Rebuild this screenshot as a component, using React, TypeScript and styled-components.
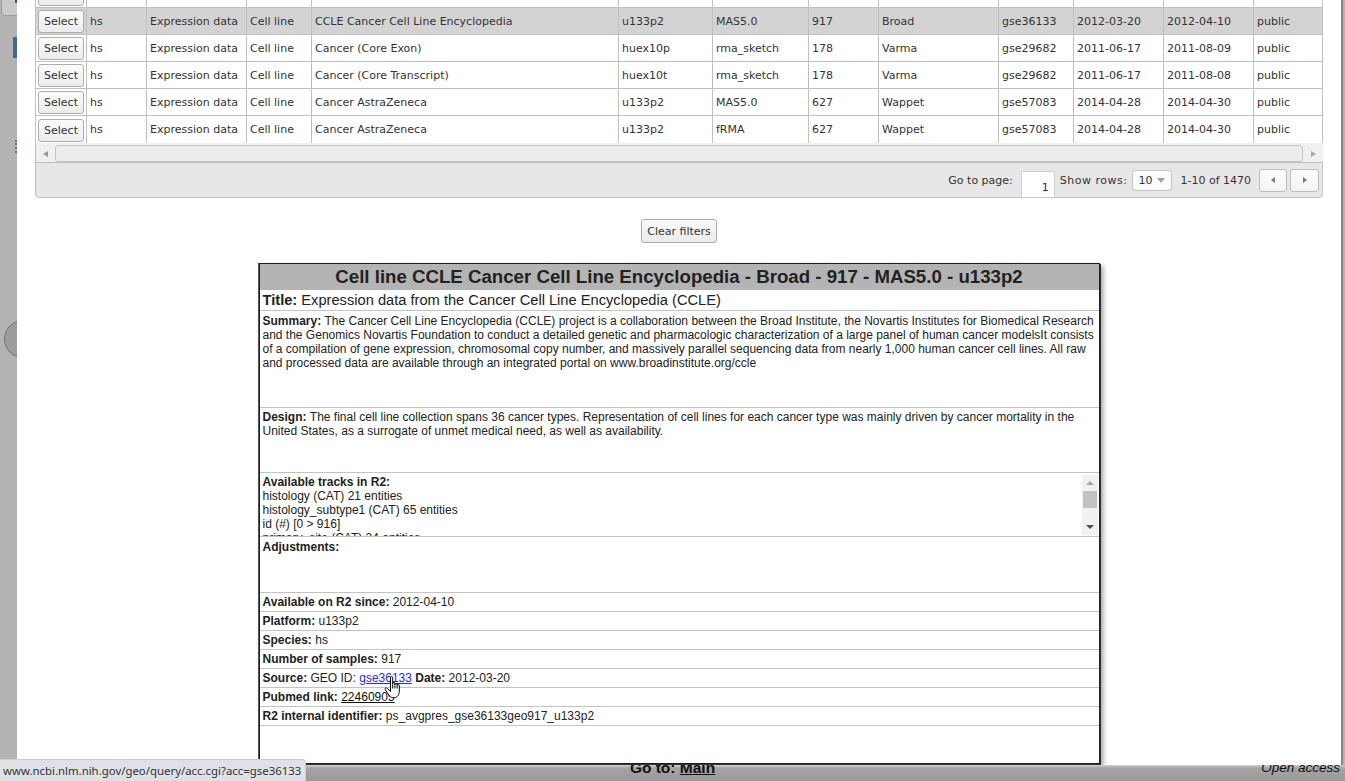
import React from "react";
import styled, { createGlobalStyle } from "styled-components";

const TABLE_FONT = `"DejaVu Sans", Verdana, sans-serif`;
const PANEL_FONT = `"Liberation Sans", Arial, sans-serif`;

const GlobalStyle = createGlobalStyle`
  html, body { margin: 0; padding: 0; width: 100%; height: 100%; overflow: hidden; }
  body { background: #b3b3b3; font-family: ${PANEL_FONT}; }
  #root { width: 100%; height: 100%; }
  *, *::before, *::after { box-sizing: border-box; }
`;

/* ---------- page behind the dialog ---------- */

const Viewport = styled.div`
  position: relative;
  width: 100%;
  height: 100%;
  display: flex;
  flex-direction: column;
  justify-content: flex-end;
  overflow: hidden;
`;

const BehindTab = styled.span`
  position: absolute;
  left: 1px;
  top: -6px;
  width: 20px;
  height: 22px;
  background: #c9c9c9;
  border: 1px solid #9b9b9b;
  border-radius: 4px;
`;

const BehindDot = styled.span`
  position: absolute;
  left: 15px;
  top: 0;
  width: 3px;
  height: 3px;
  background: #8c3266;
`;

const BehindBlueBar = styled.span`
  position: absolute;
  left: 13px;
  top: 37px;
  width: 6px;
  height: 21px;
  background: #3f66a3;
`;

const BehindBracket = styled.span`
  position: absolute;
  left: 15px;
  top: 140px;
  width: 4px;
  height: 13px;
  border-left: 2px dotted #4a72b5;
`;

const BehindKnob = styled.span`
  position: absolute;
  left: 4px;
  top: 320px;
  width: 38px;
  height: 38px;
  border-radius: 50%;
  background: #9c9c9c;
  border: 1px solid #727272;
`;

const PageFooter = styled.footer`
  flex: none;
  height: 16px;
  display: grid;
  grid-template-columns: 1fr auto 1fr;
  align-items: start;
  padding: 0 5px;
  background: linear-gradient(#d2d2d2 0px, #a4a4a4 3px, #9a9a9a 100%);
  font-family: ${PANEL_FONT};
  color: #111;
  line-height: 6px;
`;

const FooterNav = styled.span`
  grid-column: 2;
  font-size: 15.5px;
  font-weight: bold;
  white-space: nowrap;
`;

const FooterLink = styled.span`
  text-decoration: underline;
`;

const FooterNote = styled.span`
  grid-column: 3;
  justify-self: end;
  font-size: 13.5px;
  font-style: italic;
  white-space: nowrap;
`;

/* ---------- dialog ---------- */

const Modal = styled.section`
  position: absolute;
  left: 17px;
  top: 0;
  width: 1326px;
  height: 765px;
  background: #fff;
  border-right: 2px solid #858585;
  overflow: hidden;
  z-index: 2;
`;

const ScrolledBody = styled.div`
  margin-top: -19px;
  padding: 0 18px;
  display: flex;
  flex-direction: column;
`;

const GridBox = styled.div`
  border-left: 1px solid #c0c0c0;
  border-radius: 0 0 4px 4px;
  font-family: ${TABLE_FONT};
  font-size: 11px;
  color: #333;
`;

const COLS =
  "51px 60px 100px 65px 307px 94px 96px 70px 120px 75px 90px 90px 69px";

const Rows = styled.div`
  display: flex;
  flex-direction: column;
`;

const DataRow = styled.div<{ $selected?: boolean }>`
  display: grid;
  grid-template-columns: ${COLS};
  height: 27px;
  background: ${(p) => (p.$selected ? "#d3d3d3" : "#fff")};
  &:last-child > * {
    border-bottom: none;
  }
`;

const Cell = styled.div<{ $tight?: boolean }>`
  border-right: 1px solid #c0c0c0;
  border-bottom: 1px solid #c0c0c0;
  padding: 0 ${(p) => (p.$tight ? "2px" : "3px")};
  display: flex;
  align-items: center;
  white-space: nowrap;
  overflow: hidden;
`;

const SelectButton = styled.button`
  width: 46px;
  height: 23px;
  margin-top: 1px;
  padding: 0;
  border: 1px solid #adadad;
  border-radius: 3px;
  background: linear-gradient(#fbfbfb, #ececec);
  font-family: ${TABLE_FONT};
  font-size: 11px;
  color: #333;
`;

const HScroll = styled.div`
  height: 19px;
  display: flex;
  align-items: stretch;
  background: #f0f0f0;
`;

const HArrowBox = styled.div<{ $w: number }>`
  width: ${(p) => p.$w}px;
  display: flex;
  align-items: center;
  justify-content: center;
  padding-top: 2px;
`;

const TriLeft = styled.span`
  width: 0;
  height: 0;
  border-top: 3.5px solid transparent;
  border-bottom: 3.5px solid transparent;
  border-right: 5px solid #9a9a9a;
`;

const TriRight = styled.span`
  width: 0;
  height: 0;
  border-top: 3.5px solid transparent;
  border-bottom: 3.5px solid transparent;
  border-left: 5px solid #a8a8a8;
`;

const HTrack = styled.div`
  flex: 1;
  margin-top: 2px;
  border: 1px solid #c4c4c4;
  border-radius: 3px;
  background: #ececec;
`;

const Pager = styled.div`
  height: 36px;
  display: flex;
  align-items: center;
  justify-content: flex-end;
  padding-right: 3px;
  background: #e7e7e7;
  border-top: 1px solid #bdbdbd;
  border-bottom: 1px solid #c6c6c6;
  border-right: 1px solid #c6c6c6;
  border-radius: 0 0 4px 4px;
`;

const PagerText = styled.span<{ $ml?: number; $ls?: number }>`
  margin-left: ${(p) => p.$ml ?? 0}px;
  letter-spacing: ${(p) => p.$ls ?? 0}px;
  white-space: nowrap;
`;

const PageInput = styled.div`
  align-self: flex-end;
  margin-left: 8px;
  width: 34px;
  height: 26px;
  padding: 9px 5px 0 0;
  text-align: right;
  background: #fff;
  border: 1px solid #cfcfcf;
  border-bottom: none;
  border-radius: 2px 2px 0 0;
  line-height: 13px;
`;

const RowsSelect = styled.div`
  margin-left: 5px;
  width: 40px;
  height: 21px;
  display: flex;
  align-items: center;
  justify-content: space-between;
  padding: 0 6px 0 5px;
  background: #fbfbfb;
  border: 1px solid #c2c2c2;
  border-radius: 3px;
`;

const TriDown = styled.span`
  width: 0;
  height: 0;
  border-left: 4px solid transparent;
  border-right: 4px solid transparent;
  border-top: 5px solid #9e9e9e;
`;

const NavButton = styled.div<{ $ml: number; $w: number }>`
  margin-left: ${(p) => p.$ml}px;
  width: ${(p) => p.$w}px;
  height: 23px;
  display: flex;
  align-items: center;
  justify-content: center;
  background: linear-gradient(#fdfdfd, #f2f2f2);
  border: 1px solid #bdbdbd;
  border-radius: 3px;
`;

const NavTriLeft = styled(TriLeft)`
  border-right-color: #7a7a7a;
  border-top-width: 3px;
  border-bottom-width: 3px;
  border-right-width: 4px;
`;

const NavTriRight = styled(TriRight)`
  border-left-color: #7a7a7a;
  border-top-width: 3px;
  border-bottom-width: 3px;
  border-left-width: 4px;
`;

const ClearRow = styled.div`
  margin-top: 21px;
  display: flex;
  justify-content: center;
`;

const PlainButton = styled.button`
  width: 76px;
  height: 24px;
  padding: 0;
  border: 1px solid #a9a9a9;
  border-radius: 3px;
  background: linear-gradient(#fafafa, #ebebeb);
  font-family: ${TABLE_FONT};
  font-size: 11px;
  color: #333;
`;

/* ---------- detail panel ---------- */

const InfoPanel = styled.div`
  align-self: center;
  margin-top: 20px;
  width: 841px;
  height: 501px;
  display: flex;
  flex-direction: column;
  background: #fff;
  border: 1px solid #1e1e1e;
  box-shadow: -1px 0 0 #555, 1px 1px 0 #333, 3px 3px 5px rgba(0, 0, 0, 0.4);
  font-family: ${PANEL_FONT};
  color: #222;
`;

const PanelHeader = styled.div`
  flex: none;
  height: 26px;
  line-height: 26px;
  text-align: center;
  background: #b4b4b4;
  font-size: 18.67px;
  font-weight: bold;
  color: #222;
  white-space: nowrap;
`;

const InfoRow = styled.div<{ $h: number; $pt?: number; $center?: boolean; $big?: boolean }>`
  flex: none;
  height: ${(p) => p.$h}px;
  padding: ${(p) => p.$pt ?? 0}px 3px 0 3px;
  border-bottom: 1px solid #c3c3c3;
  font-size: ${(p) => (p.$big ? "14.67px" : "12px")};
  line-height: 14px;
  display: ${(p) => (p.$center ? "flex" : "block")};
  align-items: center;
  white-space: ${(p) => (p.$center ? "nowrap" : "normal")};
  overflow: hidden;
`;

const Label = styled.b`
  font-weight: bold;
  white-space: pre;
`;

const GeoLink = styled.a`
  color: #2a2ad6;
  text-decoration: underline;
  white-space: pre;
`;

const PlainLink = styled.a`
  color: #111;
  text-decoration: underline;
`;

const TrackRow = styled.div`
  flex: none;
  height: 64px;
  display: flex;
  border-bottom: 1px solid #c3c3c3;
  font-size: 12px;
  line-height: 14px;
`;

const TrackList = styled.div`
  flex: 1;
  padding: 2px 3px 0 3px;
  height: 63px;
  overflow: hidden;
`;

const VScroll = styled.div`
  width: 16px;
  height: 60px;
  margin: 2px 1px 0 0;
  display: flex;
  flex-direction: column;
  align-items: center;
  background: #f1f1f1;
`;

const VArrowBox = styled.div`
  height: 16px;
  display: flex;
  align-items: center;
  justify-content: center;
`;

const TriUp = styled.span`
  width: 0;
  height: 0;
  border-left: 4px solid transparent;
  border-right: 4px solid transparent;
  border-bottom: 4px solid #a3a3a3;
`;

const TriDownV = styled.span`
  width: 0;
  height: 0;
  border-left: 4px solid transparent;
  border-right: 4px solid transparent;
  border-top: 4px solid #505050;
`;

const VThumb = styled.div`
  width: 14px;
  height: 17px;
  background: #c1c1c1;
`;

const VSpacer = styled.div`
  flex: 1;
`;

/* ---------- overlays ---------- */

const StatusTip = styled.div`
  position: absolute;
  left: 0;
  bottom: 0;
  z-index: 4;
  height: 22px;
  padding: 0 4px 0 3px;
  display: flex;
  align-items: center;
  background: #dee1e6;
  border-top: 1px solid #c9ccd1;
  border-right: 1px solid #c9ccd1;
  border-top-right-radius: 4px;
  font-family: "Noto Sans", "Open Sans", sans-serif;
  font-size: 11.4px;
  color: #333;
  white-space: nowrap;
`;

const Pointer = styled.svg`
  position: absolute;
  left: 384px;
  top: 676px;
  z-index: 5;
`;

type Row = {
  species: string;
  type: string;
  cat: string;
  name: string;
  chip: string;
  norm: string;
  n: string;
  author: string;
  gse: string;
  d1: string;
  d2: string;
  access: string;
  selected?: boolean;
};

const ROWS: Row[] = [
  { species: "hs", type: "Expression data", cat: "Cell line", name: "Cancer Sanger", chip: "u133a", norm: "MAS5.0", n: "798", author: "Greshock", gse: "gse68950", d1: "2015-05-05", d2: "2015-06-01", access: "public" },
  { species: "hs", type: "Expression data", cat: "Cell line", name: "CCLE Cancer Cell Line Encyclopedia", chip: "u133p2", norm: "MAS5.0", n: "917", author: "Broad", gse: "gse36133", d1: "2012-03-20", d2: "2012-04-10", access: "public", selected: true },
  { species: "hs", type: "Expression data", cat: "Cell line", name: "Cancer (Core Exon)", chip: "huex10p", norm: "rma_sketch", n: "178", author: "Varma", gse: "gse29682", d1: "2011-06-17", d2: "2011-08-09", access: "public" },
  { species: "hs", type: "Expression data", cat: "Cell line", name: "Cancer (Core Transcript)", chip: "huex10t", norm: "rma_sketch", n: "178", author: "Varma", gse: "gse29682", d1: "2011-06-17", d2: "2011-08-08", access: "public" },
  { species: "hs", type: "Expression data", cat: "Cell line", name: "Cancer AstraZeneca", chip: "u133p2", norm: "MAS5.0", n: "627", author: "Wappet", gse: "gse57083", d1: "2014-04-28", d2: "2014-04-30", access: "public" },
  { species: "hs", type: "Expression data", cat: "Cell line", name: "Cancer AstraZeneca", chip: "u133p2", norm: "fRMA", n: "627", author: "Wappet", gse: "gse57083", d1: "2014-04-28", d2: "2014-04-30", access: "public" },
];

const TRACKS = [
  "histology (CAT) 21 entities",
  "histology_subtype1 (CAT) 65 entities",
  "id (#) [0 > 916]",
  "primary_site (CAT) 24 entities",
  "gender (CAT) 3 entities",
];

const SMALL_ROWS: Array<[string, React.ReactNode]> = [
  ["Available on R2 since: ", "2012-04-10"],
  ["Platform: ", "u133p2"],
  ["Species: ", "hs"],
  ["Number of samples: ", "917"],
];

export default function App() {
  return (
    <>
      <GlobalStyle />
      <Viewport>
        <BehindTab />
        <BehindDot />
        <BehindBlueBar />
        <BehindBracket />
        <BehindKnob />

        <PageFooter>
          <FooterNav>
            Go to: <FooterLink>Main</FooterLink>
          </FooterNav>
          <FooterNote>Open access</FooterNote>
        </PageFooter>

        <Modal>
          <ScrolledBody>
            <GridBox>
              <Rows>
                {ROWS.map((r, i) => (
                  <DataRow key={i} $selected={r.selected}>
                    <Cell $tight>
                      <SelectButton>Select</SelectButton>
                    </Cell>
                    <Cell>{r.species}</Cell>
                    <Cell>{r.type}</Cell>
                    <Cell>{r.cat}</Cell>
                    <Cell>{r.name}</Cell>
                    <Cell>{r.chip}</Cell>
                    <Cell>{r.norm}</Cell>
                    <Cell>{r.n}</Cell>
                    <Cell>{r.author}</Cell>
                    <Cell>{r.gse}</Cell>
                    <Cell>{r.d1}</Cell>
                    <Cell>{r.d2}</Cell>
                    <Cell>{r.access}</Cell>
                  </DataRow>
                ))}
              </Rows>
              <HScroll>
                <HArrowBox $w={19}>
                  <TriLeft />
                </HArrowBox>
                <HTrack />
                <HArrowBox $w={20}>
                  <TriRight />
                </HArrowBox>
              </HScroll>
              <Pager>
                <PagerText>Go to page:</PagerText>
                <PageInput>1</PageInput>
                <PagerText $ml={5} $ls={0.5}>Show rows:</PagerText>
                <RowsSelect>
                  <span>10</span>
                  <TriDown />
                </RowsSelect>
                <PagerText $ml={8}>1-10 of 1470</PagerText>
                <NavButton $ml={8} $w={28}>
                  <NavTriLeft />
                </NavButton>
                <NavButton $ml={3} $w={29}>
                  <NavTriRight />
                </NavButton>
              </Pager>
            </GridBox>

            <ClearRow>
              <PlainButton>Clear filters</PlainButton>
            </ClearRow>

            <InfoPanel>
              <PanelHeader>
                Cell line CCLE Cancer Cell Line Encyclopedia - Broad - 917 - MAS5.0 - u133p2
              </PanelHeader>
              <InfoRow $h={21} $center $big>
                <Label>Title: </Label>Expression data from the Cancer Cell Line Encyclopedia (CCLE)
              </InfoRow>
              <InfoRow $h={97} $pt={3}>
                <Label>Summary: </Label>The Cancer Cell Line Encyclopedia (CCLE) project is a
                collaboration between the Broad Institute, the Novartis Institutes for Biomedical
                Research and the Genomics Novartis Foundation to conduct a detailed genetic and
                pharmacologic characterization of a large panel of human cancer modelsIt consists of a
                compilation of gene expression, chromosomal copy number, and massively parallel
                sequencing data from nearly 1,000 human cancer cell lines. All raw and processed data
                are available through an integrated portal on www.broadinstitute.org/ccle
              </InfoRow>
              <InfoRow $h={65} $pt={2}>
                <Label>Design: </Label>The final cell line collection spans 36 cancer types.
                Representation of cell lines for each cancer type was mainly driven by cancer
                mortality in the United States, as a surrogate of unmet medical need, as well as
                availability.
              </InfoRow>
              <TrackRow>
                <TrackList>
                  <Label>Available tracks in R2:</Label>
                  {TRACKS.map((t) => (
                    <div key={t}>{t}</div>
                  ))}
                </TrackList>
                <VScroll>
                  <VArrowBox>
                    <TriUp />
                  </VArrowBox>
                  <VThumb />
                  <VSpacer />
                  <VArrowBox>
                    <TriDownV />
                  </VArrowBox>
                </VScroll>
              </TrackRow>
              <InfoRow $h={56} $pt={3}>
                <Label>Adjustments:</Label>
              </InfoRow>
              {SMALL_ROWS.map(([k, v]) => (
                <InfoRow key={k} $h={19} $center>
                  <Label>{k}</Label>
                  {v}
                </InfoRow>
              ))}
              <InfoRow $h={19} $center>
                <Label>Source: </Label>GEO ID:&nbsp;<GeoLink>gse36133</GeoLink>
                <Label> Date: </Label>2012-03-20
              </InfoRow>
              <InfoRow $h={19} $center>
                <Label>Pubmed link: </Label>
                <PlainLink>22460905</PlainLink>
              </InfoRow>
              <InfoRow $h={19} $center>
                <Label>R2 internal identifier: </Label>ps_avgpres_gse36133geo917_u133p2
              </InfoRow>
            </InfoPanel>
          </ScrolledBody>
        </Modal>

        <StatusTip>www.ncbi.nlm.nih.gov/geo/query/acc.cgi?acc=gse36133</StatusTip>

        <Pointer width="18" height="23" viewBox="0 0 18 23">
          <path
            d="M6.5 1.6C6.5 0.9 7 0.5 7.6 0.5C8.2 0.5 8.7 0.9 8.7 1.6V8.5V7.4C8.7 6.8 9.2 6.4 9.8 6.4C10.4 6.4 10.9 6.8 10.9 7.4V9V8.3C10.9 7.7 11.4 7.3 12 7.3C12.6 7.3 13.1 7.7 13.1 8.3V9.8V9.3C13.1 8.7 13.6 8.3 14.2 8.3C14.8 8.3 15.3 8.7 15.3 9.3V15C15.3 18.6 13.5 21.5 10.5 21.5H8.8C6.8 21.5 5.8 20.5 4.8 19L1.3 13.6C0.9 13 1.1 12.3 1.7 12C2.3 11.7 2.9 11.9 3.3 12.4L6.5 15.5Z"
            fill="#fff"
            stroke="#000"
            strokeWidth="1"
            strokeLinejoin="round"
          />
          <path d="M8.7 9V12.5M10.9 9.5V12.5M13.1 10V12.5" stroke="#000" strokeWidth="1" fill="none" />
        </Pointer>
      </Viewport>
    </>
  );
}
